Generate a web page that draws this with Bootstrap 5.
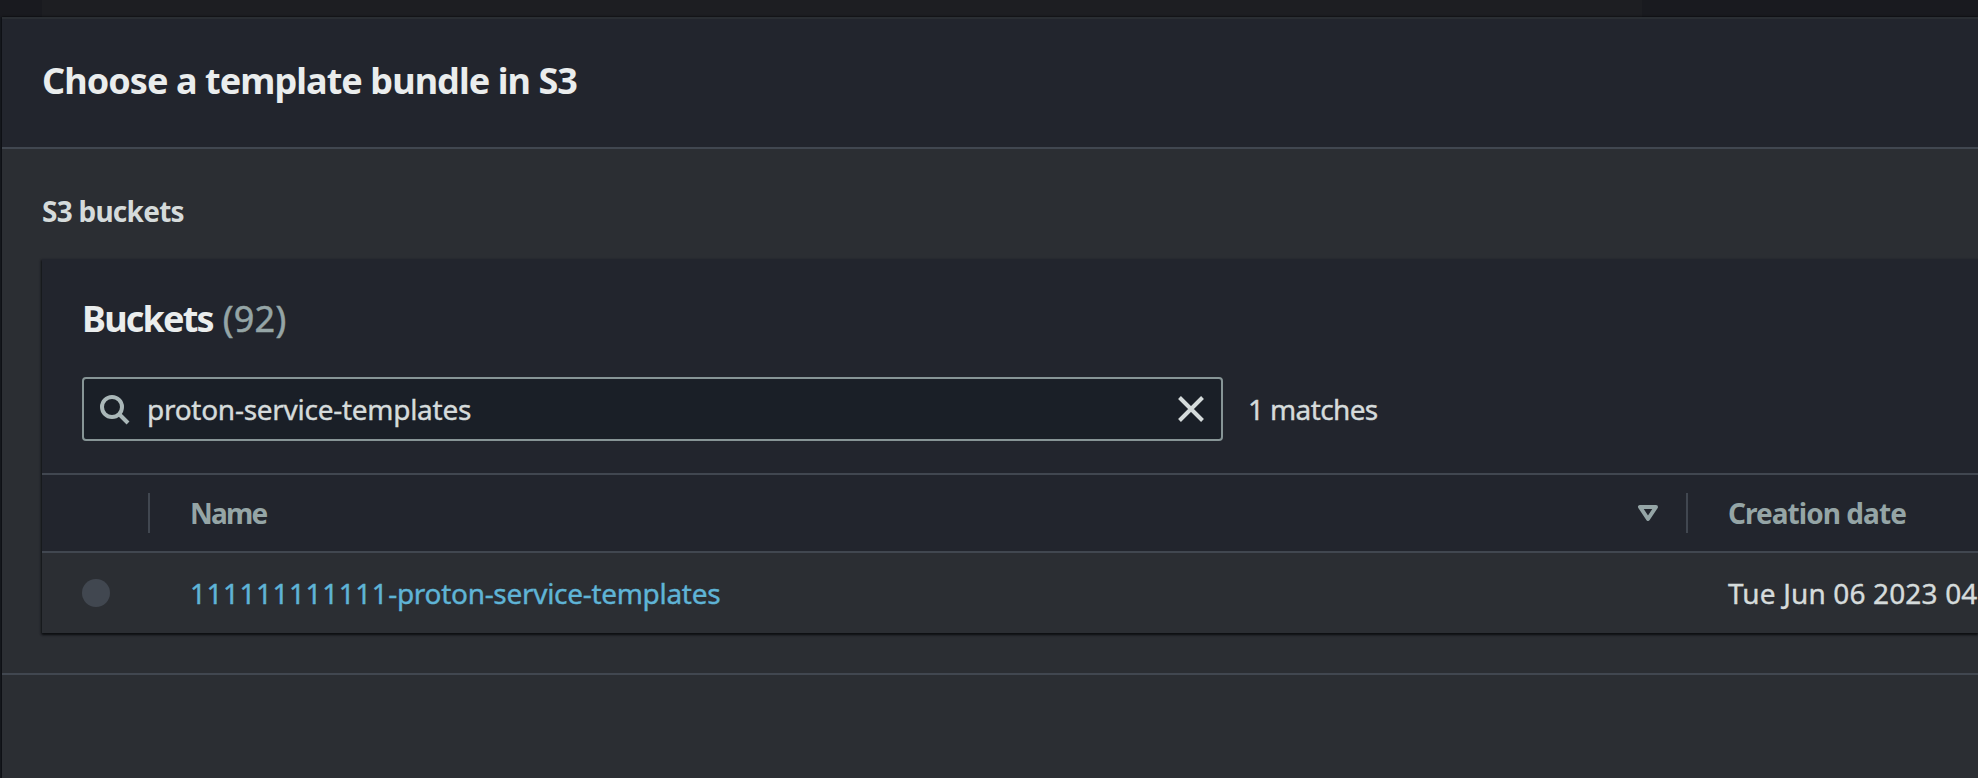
<!DOCTYPE html>
<html lang="en">
<head>
<meta charset="utf-8">
<title>Choose a template bundle in S3</title>
<link href="https://cdn.jsdelivr.net/npm/bootstrap@5.3.0/dist/css/bootstrap.min.css" rel="stylesheet">
<style>
html, body { height: 100%; }
body { background: #16191f; color: #d5dbdb; font-family: "Noto Sans", "Open Sans", sans-serif; font-size: 28px; line-height: 44px; overflow: hidden; white-space: nowrap; -webkit-text-stroke: .4px; }
.fw-bold, .head-row { -webkit-text-stroke: 0; }
.backdrop-strip { height: 17px; flex: none; background: #191a1f; padding-left: 42px; }
.backdrop-strip div { width: 1600px; height: 17px; background: #1d1e22; }
.dialog { margin-left: 2px; background: #2b2e33; border-top: 2px solid #2a2e33; box-shadow: 0 0 2px #000; }
.dialog-head { height: 130px; padding: 0 0 4px 40px; background: #22252d; border-bottom: 2px solid #414750; }
.dialog-head h1 { font-size: 36px; line-height: 46px; color: #eaeded; letter-spacing: -.93px; }
.dialog-main { padding: 40px 0 40px 40px; border-bottom: 2px solid #414750; }
.section-title { letter-spacing: -.75px; margin-bottom: 26px; font-size: 28px; line-height: 44px; }
.panel { background: #22252d; box-shadow: 0 2px 2px #0e1013, -1px 1px 2px #17191d; }
.panel-head { padding: 37px 0 32px 40px; }
.panel-head h2 { font-size: 36px; line-height: 46px; color: #eaeded; margin-bottom: 35px; }
.bk { letter-spacing: -1.8px; }
.count { color: #95a5a6; margin-left: 10px; letter-spacing: .2px; -webkit-text-stroke: .5px; }
.search-box { width: 1141px; height: 64px; background: #1a1f27; border: 2px solid #879596; border-radius: 4px; padding: 0 17px 0 15px; margin-right: 25px; }
.search-box span { letter-spacing: -.27px; margin-left: 16px; }
.matches { letter-spacing: -.62px; padding-bottom: 1px; }
.grid-row { display: grid; grid-template-columns: 106px 1538px 1fr; }
.head-row { height: 80px; border-top: 2px solid #414750; border-bottom: 2px solid #414750; color: #95a5a6; font-weight: 700; padding-top: 18px; line-height: 38px; }
.head-row > div { height: 40px; }
.head-row > div + div { border-left: 2px solid #414750; padding-left: 40px; }
.col-name { letter-spacing: -1.8px; }
.col-date { letter-spacing: -.95px; line-height: 40px; }
.sort-icon { margin-right: 27px; }
.data-row { height: 80px; background: #2b2e33; align-items: center; }
.data-row > div + div { padding-left: 42px; padding-bottom: 1px; }
.radio-dot { width: 28px; height: 28px; border-radius: 50%; background: #414750; margin-left: 40px; }
.bucket-link { color: #5fb4d6; letter-spacing: -.3px; }
.account-id { letter-spacing: .5px; }
.created { letter-spacing: .15px; }
</style>
<script src="https://cdn.jsdelivr.net/npm/bootstrap@5.3.0/dist/js/bootstrap.bundle.min.js"></script>
</head>
<body class="d-flex flex-column">
<div class="backdrop-strip"><div></div></div>
<main class="dialog flex-grow-1">
  <header class="dialog-head d-flex align-items-center"><h1 class="m-0 fw-bold">Choose a template bundle in S3</h1></header>
  <section class="dialog-main">
    <h3 class="section-title fw-bold">S3 buckets</h3>
    <div class="panel">
      <div class="panel-head">
        <h2 class="d-flex fw-bold"><span class="bk">Buckets</span><span class="count fw-normal">(92)</span></h2>
        <div class="d-flex align-items-center">
          <div class="search-box d-flex align-items-center">
            <svg width="32" height="32" viewBox="0 0 32 32" fill="none" stroke="#aab7b8" stroke-width="4"><circle cx="13" cy="14" r="10"/><path d="M20 21l9 9"/></svg>
            <span>proton-service-templates</span>
            <svg class="ms-auto" width="26" height="26" viewBox="0 0 26 26" fill="none" stroke="#d5dbdb" stroke-width="4"><path d="M1.500 1.500l23 23M24.500 1.500l-23 23"/></svg>
          </div>
          <div class="matches">1 matches</div>
        </div>
      </div>
      <div class="grid-row head-row">
        <div></div>
        <div class="d-flex align-items-center justify-content-between"><span class="col-name">Name</span>
          <svg class="sort-icon" width="22" height="18" viewBox="0 0 22 18" fill="none" stroke="#95a5a6" stroke-width="4" stroke-linejoin="round"><path d="M3 3H19L11 15Z"/></svg></div>
        <div class="col-date">Creation date</div>
      </div>
      <div class="grid-row data-row">
        <div><div class="radio-dot"></div></div>
        <div><a class="bucket-link text-decoration-none" href="#"><span class="account-id">111111111111</span>-proton-service-templates</a></div>
        <div class="created">Tue Jun 06 2023 04</div>
      </div>
    </div>
  </section>
</main>
</body>
</html>
